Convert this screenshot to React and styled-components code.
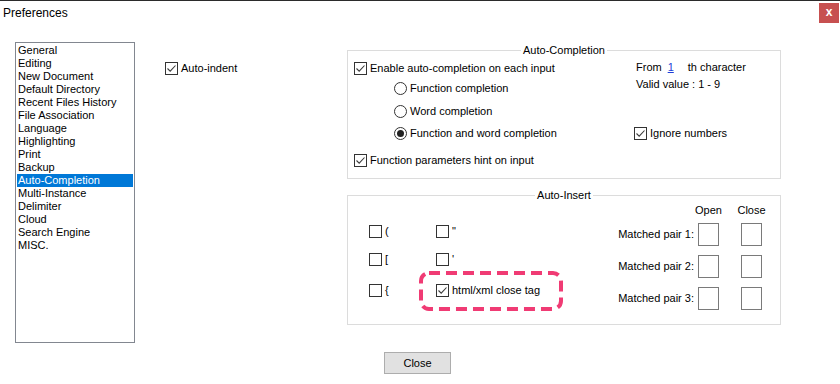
import React from 'react'
import styled, { createGlobalStyle } from 'styled-components'

const GlobalStyle = createGlobalStyle`
  html, body {
    margin: 0;
    padding: 0;
    background: #fff;
  }
  body {
    font-family: "Liberation Sans", Arial, sans-serif;
    font-size: 11px;
    color: #000;
  }
`

const pages = [
  'General', 'Editing', 'New Document', 'Default Directory', 'Recent Files History',
  'File Association', 'Language', 'Highlighting', 'Print', 'Backup', 'Auto-Completion',
  'Multi-Instance', 'Delimiter', 'Cloud', 'Search Engine', 'MISC.'
]

function CheckBox({ checked, label }) {
  return (
    <CheckRow>
      <Box>
        {checked && (
          <svg width="11" height="11" viewBox="0 0 11 11">
            <polyline points="1.5,5.5 4.2,8.2 9.5,2.5" fill="none" stroke="#3c3c3c" strokeWidth="1.1" />
          </svg>
        )}
      </Box>
      {label && <span>{label}</span>}
    </CheckRow>
  )
}

function Radio({ checked, label }) {
  return (
    <RadioRow>
      <Circle>{checked && <Dot />}</Circle>
      <span>{label}</span>
    </RadioRow>
  )
}

function App() {
  return (
    <Window>
      <GlobalStyle />
      <TitleBar>
        <Title>Preferences</Title>
        <CloseX>x</CloseX>
      </TitleBar>

      <Body>
        <ListBox>
          {pages.map((p) => (
            <ListItem key={p} $selected={p === 'Auto-Completion'}>{p}</ListItem>
          ))}
        </ListBox>

        <Middle>
          <CheckBox checked label="Auto-indent" />
        </Middle>

        <RightColumn>
          <Group>
            <Legend>Auto-Completion</Legend>
            <GroupRow $pad="0 0 11px 6px">
              <LeftCol>
                <Line $mt={3}><CheckBox checked label="Enable auto-completion on each input" /></Line>
                <Line $mt={6} $indent={40}><Radio label="Function completion" /></Line>
                <Line $mt={9} $indent={40}><Radio label="Word completion" /></Line>
                <Line $mt={8} $indent={40}><Radio checked label="Function and word completion" /></Line>
                <Line $mt={13}><CheckBox checked label="Function parameters hint on input" /></Line>
              </LeftCol>
              <RightCol>
                <Line $mt={2} $indent={2}>
                  From<Link>1</Link>th character
                </Line>
                <Line $mt={3} $indent={2}>Valid value : 1 - 9</Line>
                <Line $mt={35}><CheckBox checked label="Ignore numbers" /></Line>
              </RightCol>
            </GroupRow>
          </Group>

          <Group $mt={9}>
            <Legend>Auto-Insert</Legend>
            <GroupRow $pad="0 18px 14px 21px">
              <CharGrid>
                <CheckBox label="(" />
                <CheckBox label={'"'} />
                <CheckBox label="[" />
                <CheckBox label="'" />
                <CheckBox label="{" />
                <Marked>
                  <CheckBox checked label="html/xml close tag" />
                  <Highlight>
                    <svg width="144" height="40" viewBox="0 0 144 40">
                      <rect x="2" y="2" width="140" height="36" rx="8" ry="8" fill="none"
                        stroke="#f03b74" strokeWidth="4" strokeDasharray="11 6" />
                    </svg>
                  </Highlight>
                </Marked>
              </CharGrid>

              <PairGrid>
                <span />
                <Head>Open</Head>
                <Head>Close</Head>
                {[1, 2, 3].map((n) => (
                  <React.Fragment key={n}>
                    <PairLabel>Matched pair {n}:</PairLabel>
                    <CharInput />
                    <CharInput />
                  </React.Fragment>
                ))}
              </PairGrid>
            </GroupRow>
          </Group>
        </RightColumn>
      </Body>

      <Footer>
        <Button>Close</Button>
      </Footer>
    </Window>
  )
}

const Window = styled.div`
  width: 840px;
  height: 384px;
  box-sizing: border-box;
  border-top: 1px solid #2b2b2b;
  background: #fff;
  display: flex;
  flex-direction: column;
  overflow: hidden;
`

const TitleBar = styled.div`
  height: 25px;
  display: flex;
  justify-content: space-between;
  align-items: flex-start;
  padding-left: 3px;
`

const Title = styled.div`
  font-size: 12px;
  line-height: 25px;
`

const CloseX = styled.div`
  width: 20px;
  height: 20px;
  margin: 2px 1px 0 0;
  background: #c75050;
  color: #fff;
  font-weight: bold;
  font-size: 12px;
  line-height: 18px;
  text-align: center;
`

const Body = styled.div`
  display: flex;
  align-items: flex-start;
  padding: 16px 0 0 15px;
`

const ListBox = styled.div`
  width: 120px;
  height: 301px;
  box-sizing: border-box;
  border: 1px solid #828790;
  padding: 1px;
  flex-shrink: 0;
`

const ListItem = styled.div`
  height: 13px;
  line-height: 13px;
  padding-left: 1px;
  white-space: nowrap;
  background: ${(p) => (p.$selected ? '#0078d7' : 'transparent')};
  color: ${(p) => (p.$selected ? '#fff' : '#000')};
`

const Middle = styled.div`
  width: 182px;
  margin-left: 30px;
  padding-top: 19px;
  flex-shrink: 0;
`

const RightColumn = styled.div`
  width: 434px;
  margin-top: 1px;
  display: flex;
  flex-direction: column;
`

const Group = styled.fieldset`
  margin: ${(p) => p.$mt || 0}px 0 0 0;
  padding: 0;
  min-width: 0;
  border: 1px solid #dcdcdc;
  box-sizing: border-box;
  width: 434px;
`

const Legend = styled.legend`
  margin: 0 auto;
  padding: 0 2px;
  line-height: 15px;
  height: 15px;
`

const GroupRow = styled.div`
  display: flex;
  justify-content: space-between;
  align-items: flex-start;
  padding: ${(p) => p.$pad};
`

const LeftCol = styled.div`
  width: 280px;
  display: flex;
  flex-direction: column;
`

const RightCol = styled.div`
  flex: 1;
  display: flex;
  flex-direction: column;
`

const Line = styled.div`
  height: 14px;
  line-height: 14px;
  margin-top: ${(p) => p.$mt || 0}px;
  padding-left: ${(p) => p.$indent || 0}px;
  display: flex;
  align-items: center;
  white-space: nowrap;
`

const Link = styled.span`
  color: #1e3fd8;
  text-decoration: underline;
  margin: 0 14px 0 6px;
`

const CheckRow = styled.div`
  height: 14px;
  display: flex;
  align-items: center;
  gap: 3px;
  white-space: nowrap;
`

const Box = styled.span`
  width: 13px;
  height: 13px;
  box-sizing: border-box;
  border: 1px solid #333;
  background: #fff;
  display: inline-flex;
  align-items: center;
  justify-content: center;
  flex-shrink: 0;
`

const RadioRow = styled.div`
  display: flex;
  align-items: center;
  gap: 3px;
`

const Circle = styled.span`
  width: 13px;
  height: 13px;
  box-sizing: border-box;
  border: 1px solid #333;
  border-radius: 50%;
  display: inline-flex;
  align-items: center;
  justify-content: center;
`

const Dot = styled.span`
  width: 7px;
  height: 7px;
  border-radius: 50%;
  background: #222;
`

const CharGrid = styled.div`
  margin-top: 21px;
  display: grid;
  grid-template-columns: 67px auto;
  grid-template-rows: 28px 31px 14px;
  align-items: start;
`

const Marked = styled.div`
  position: relative;
`

const Highlight = styled.div`
  position: absolute;
  left: -17px;
  top: -12px;
  width: 144px;
  height: 40px;
  pointer-events: none;

  svg {
    display: block;
  }
`

const PairGrid = styled.div`
  display: grid;
  grid-template-columns: auto 25px 43px;
  grid-template-rows: 20px 32px 32px 23px;
  align-items: start;
`

const Head = styled.div`
  justify-self: end;
  width: 21px;
  line-height: 14px;
  display: flex;
  justify-content: center;
  white-space: nowrap;
`

const PairLabel = styled.div`
  height: 23px;
  line-height: 23px;
  white-space: nowrap;
  text-align: right;
`

const CharInput = styled.div`
  justify-self: end;
  width: 21px;
  height: 23px;
  box-sizing: border-box;
  border: 1px solid #7a7a7a;
  background: #fff;
`

const Footer = styled.div`
  display: flex;
  justify-content: center;
  padding: 9px 5px 0 0;
`

const Button = styled.button`
  width: 67px;
  height: 22px;
  box-sizing: border-box;
  border: 1px solid #adadad;
  background: #e1e1e1;
  font-family: "Liberation Sans", Arial, sans-serif;
  font-size: 11px;
  color: #000;
  padding: 0;
`

export default App
